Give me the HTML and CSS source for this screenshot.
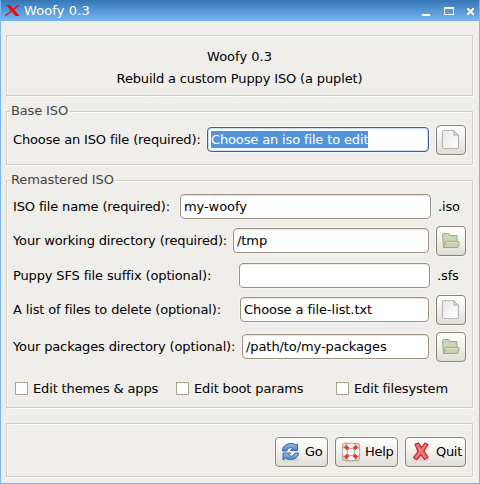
FILE: index.html
```html
<!DOCTYPE html>
<html lang="en">
<head>
<meta charset="utf-8">
<title>Woofy 0.3</title>
<link rel="stylesheet" href="styles.css">
</head>
<body>
<svg class="defs" width="0" height="0">
  <defs>
    <linearGradient id="paper" x1="0" y1="0" x2="1" y2="1"><stop offset="0" stop-color="#e9e9e9"/><stop offset="1" stop-color="#ffffff"/></linearGradient>
    <linearGradient id="folder" x1="0" y1="0" x2="0" y2="1"><stop offset="0" stop-color="#d3dbbd"/><stop offset="1" stop-color="#bdc8a2"/></linearGradient>
    <linearGradient id="blue" x1="0" y1="0" x2="0" y2="1"><stop offset="0" stop-color="#9bbce2"/><stop offset="1" stop-color="#4a80bd"/></linearGradient>
    <symbol id="file" viewBox="0 0 20 22">
      <path d="M3 1.500H12.500L17.500 6.500V18a1.500 1.500 0 0 1-1.500 1.500H3A1.500 1.500 0 0 1 1.500 18V3A1.500 1.500 0 0 1 3 1.500z" fill="url(#paper)" stroke="#b5b7b5" stroke-width="1.200"/>
      <path d="M12.500 1.500c.8 2 .8 3 .3 4.800 1.700-.4 3.200-.4 4.700.2z" fill="#dcdcda" stroke="#a9aba8" stroke-width=".9"/>
    </symbol>
    <symbol id="open" viewBox="0 0 20 18">
      <path d="M2.500 15.500 1.500 3q0-1.500 1.500-1.500h4Q8.500 1.500 8.500 3.500h7.500v6" fill="url(#folder)" stroke="#9daa8a"/>
      <path d="M2.500 15.500Q4 14 4 11q0-1.500 1.500-1.500h11.500q1.200 0 1.100 1.500l-.6 3q-.2 1.500-1.500 1.500z" fill="#c9d2ae" stroke="#9daa8a"/>
      <path d="M5.500 10.500h11.500" stroke="#e3e9d3" fill="none"/>
    </symbol>
  </defs>
</svg>
<div class="window">
  <header class="titlebar">
    <svg class="logo" width="15" height="12" viewBox="0 0 15 12"><path d="M1 0h4l9.500 11h-4z" fill="#f00"/><path d="M14 0 .5 10.800" stroke="#f00" stroke-width="1.300"/><path d="m6.500 7 3.300-2.800" stroke="#3d83c3" stroke-width=".6"/></svg>
    <span class="caption">Woofy 0.3</span>
    <svg class="controls" width="55" height="9" viewBox="0 0 55 9" shape-rendering="crispEdges"><path d="M0 7h8v2H0zM22 0h10v8H22zM23 2v5h8V2z" fill="#fff" fill-rule="evenodd"/><path d="M45 1h2v1h1v1h1V2h1V1h2v2h-1v1h-1v1h1v1h1v2h-2V7h-1V6h-1v1h-1v1h-2V6h1V5h1V4h-1V3h-1z" fill="#fff"/></svg>
  </header>
  <main>
    <section class="frame intro"><p class="name">Woofy 0.3</p><p>Rebuild a custom Puppy ISO (a puplet)</p></section>
    <section class="frame base">
      <h2>Base ISO</h2>
      <div class="row">
        <span class="label l-base">Choose an ISO file (required):</span>
        <div class="entry focus"><span class="selected">Choose an iso file to edit</span></div>
        <button class="btn pick"><svg width="20" height="22"><use href="#file"/></svg></button>
      </div>
    </section>
    <section class="frame remaster">
      <h2>Remastered ISO</h2>
      <div class="row short">
        <span class="label l-name">ISO file name (required):</span>
        <div class="entry"><span class="value">my-woofy</span></div>
        <span class="suffix iso">.iso</span>
      </div>
      <div class="row">
        <span class="label l-work">Your working directory (required):</span>
        <div class="entry"><span class="value">/tmp</span></div>
        <button class="btn pick"><svg width="20" height="18"><use href="#open"/></svg></button>
      </div>
      <div class="row short">
        <span class="label l-sfs">Puppy SFS file suffix (optional):</span>
        <div class="entry"></div>
        <span class="suffix">.sfs</span>
      </div>
      <div class="row">
        <span class="label l-list">A list of files to delete (optional):</span>
        <div class="entry"><span class="value">Choose a file-list.txt</span></div>
        <button class="btn pick"><svg width="20" height="22"><use href="#file"/></svg></button>
      </div>
      <div class="row">
        <span class="label l-pack">Your packages directory (optional):</span>
        <div class="entry"><span class="value">/path/to/my-packages</span></div>
        <button class="btn pick"><svg width="20" height="18"><use href="#open"/></svg></button>
      </div>
      <div class="checks">
        <label><i></i><span>Edit themes &amp; apps</span></label>
        <label><i></i><span>Edit boot params</span></label>
        <label><i></i><span>Edit filesystem</span></label>
      </div>
    </section>
    <section class="frame actions">
      <button class="btn go"><svg width="20" height="20" viewBox="0 0 20 20"><ellipse cx="10" cy="17.500" rx="9" ry="2" fill="#d5d3ce"/><path d="M1.500 9V7.500C2 4 6 1.500 10 1.500q3 0 5 1.500l1.500-1v6.500H9.500L11.500 6.500C9.500 5 6.500 6 5.800 9z" fill="url(#blue)" stroke="#3768a5"/><path d="M17.500 11v1c-1 4-5 5.500-8 5.500q-3 0-5-1.500L2 18v-7H9.500L7.500 13c2.500 2 5.500 1 6.500-2z" fill="url(#blue)" stroke="#3768a5"/></svg><span>Go</span></button>
      <button class="btn help"><svg width="20" height="20" viewBox="0 0 20 20"><path d="M4 1.500Q1.500 1.500 1.500 4v12q0 2.500 2.500 2.500h12q2.500 0 2.500-2.500V4q0-2.500-2.500-2.500z" fill="none" stroke="#c3ad79" stroke-width="1.300"/><circle cx="10" cy="10" r="6.200" fill="none" stroke="#999b98" stroke-width="6"/><circle cx="10" cy="10" r="6.200" fill="none" stroke="#f4f4f2" stroke-width="4.600"/><path d="m4.200 4.200 2.900 2.900m5.800 5.800 2.900 2.900m0-11.600-2.900 2.900m-5.800 5.800-2.900 2.900" stroke="#ee3030" stroke-width="3.600"/></svg><span>Help</span></button>
      <button class="btn quit"><svg width="20" height="20" viewBox="0 0 20 20"><ellipse cx="9" cy="17" rx="8.500" ry="2" fill="#d7d5d0"/><path d="M3 2.200 6.700 1.200 9.500 5.500 13 1 16 2.500 12 9 16 15 12.500 17.500 9 13 4.700 17.700 1.500 15.500 6 9.500z" fill="#ee6868" stroke="#c9252d" stroke-width="1.200" stroke-linejoin="round"/><path d="m4.800 3.200 8.700 13M14 2.700 3.700 16" stroke="#f58b8b" fill="none"/></svg><span>Quit</span></button>
    </section>
  </main>
</div>
</body>
</html>
```
FILE: styles.css
```css
* { box-sizing: border-box; }
body { margin: 0; background: #000; font: 13px/16px "DejaVu Sans", sans-serif; color: #000; letter-spacing: -0.14px; }
.defs { display: block; position: absolute; }
.window { width: 480px; height: 484px; border: 1px solid #77b7f7; border-top: 0; border-radius: 1px 1px 0 0; background: #efeeea; overflow: hidden; white-space: nowrap; }
.titlebar { height: 21px; margin: 0 -1px; padding: 0 5px 0 5px; display: flex; align-items: flex-start; color: #fff; background: linear-gradient(#3476b4, #76b7f7); }
.logo { margin-top: 5px; }
.caption { margin: 3px 0 0 4px; letter-spacing: 0.1px; }
.controls { margin: 7px -2px 0 auto; }
main { padding: 14px 6px 0 5px; }
.frame { position: relative; border: 1px solid #d0cbc1; box-shadow: inset 1px 1px #fff, 1px 1px #fff; margin-bottom: 15px; }
.frame h2 { position: absolute; left: 3px; top: -9px; margin: 0; padding: 0 2px 0 1px; background: #efeeea; color: #444; font-size: 13px; font-weight: normal; }
.intro { height: 61px; padding-top: 13px; text-align: center; }
.intro p { margin: 0 0 6px; }
.intro .name { letter-spacing: 0; }
.base { height: 54px; padding: 13px 6px 0; }
.remaster { height: 228px; padding: 13px 6px 0; }
.row { display: flex; height: 30px; margin-bottom: 7px; }
.row.short { height: 25px; }
.label { flex: none; padding-top: 7px; }
.short .label { padding-top: 5px; }
.l-base { width: 194px; }
.l-name { width: 167px; }
.l-work { width: 220px; }
.l-sfs { width: 226px; }
.l-list { width: 227px; }
.l-pack { width: 229px; }
.entry { flex: 1; height: 25px; margin-top: 2px; padding: 3px; border: 1px solid #999080; border-radius: 4px; background: #fff; box-shadow: inset 0 1px #e9e7e3, 0 0 0 1px #f6f5f2; }
.short .entry { margin-top: 0; }
.entry span { display: block; width: max-content; line-height: 17px; }
.value { letter-spacing: -0.08px; }
.entry.focus { border-color: #37639a; box-shadow: inset 0 0 0 1px #c4dcf5, 0 0 0 1px #f6f5f2; }
.selected { background: #5294d8; color: #fff; }
.suffix { width: 29px; margin-left: 7px; padding-top: 5px; }
.iso { width: 28px; }
.btn { display: flex; align-items: center; height: 30px; border: 1px solid #8b8371; border-radius: 4px; background: linear-gradient(#fff, #f3f2ef 45%, #dfddd7); box-shadow: 0 0 0 1px #f6f5f2; font: inherit; letter-spacing: -0.3px; color: #000; }
.btn svg { flex: none; }
.pick { flex: none; width: 30px; margin-left: 7px; padding: 0; justify-content: center; }
.checks { display: flex; padding: 13px 0 0 2px; }
.checks label { display: flex; flex: none; height: 13px; width: 161px; }
.checks label:nth-child(2) { width: 160px; }
.checks label:nth-child(3) { width: 120px; }
.checks i { flex: none; width: 13px; height: 13px; border: 1px solid #aaa08c; background: #fff; }
.checks span { margin: -1px 0 0 5px; }
.actions { height: 54px; margin: 0; display: flex; justify-content: flex-end; gap: 7px; padding: 13px 6px 0; }
.actions .btn { padding: 0 4px 0 5px; gap: 4px; }
.go { width: 53px; }
.help { width: 63px; }
.quit { width: 61px; }
.actions .quit { padding-left: 6px; }
```
